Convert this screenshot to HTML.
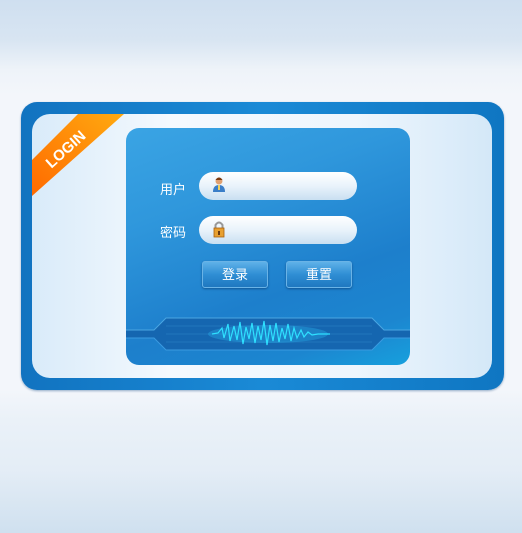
<!DOCTYPE html>
<html><head><meta charset="utf-8"><style>
*{margin:0;padding:0}
body{width:522px;height:533px;overflow:hidden;position:relative;font-family:"Liberation Sans","Noto Sans CJK SC",sans-serif;
background:linear-gradient(#cfdff0 0px,#d8e5f2 40px,#eef3f9 70px,#f3f6fb 95px,#f3f6fb 390px,#eaf1f8 420px,#e4edf6 470px,#cfe0ef 533px);}
.frame{position:absolute;left:21px;top:102px;width:483px;height:288px;border-radius:16px;
background:linear-gradient(90deg,#1173c0,#1a8ad6 50%,#0f76c2);box-shadow:0 1px 2px rgba(0,60,120,.4)}
.inner{position:absolute;left:32px;top:114px;width:460px;height:264px;border-radius:18px;overflow:hidden;
background:linear-gradient(90deg,#d9ebf9,#f4f9fe 30%,#eef6fd 70%,#d4e8f8)}
.panel{position:absolute;left:126px;top:128px;width:284px;height:237px;border-radius:13px;overflow:hidden;
background:linear-gradient(160deg,#3aa4e4 0%,#2f97dc 30%,#1d7fcc 65%,#1c86d0 85%,#17a0dd 100%)}
.lbl{position:absolute;color:#fff;font-size:13px}
.inp{position:absolute;left:199px;width:158px;height:28px;border-radius:14px;
background:linear-gradient(#ffffff,#e9f3fb 50%,#c9dff1)}
.btn{position:absolute;top:261px;width:64px;height:25px;border:1px solid #6ab3e6;border-radius:3px;
background:linear-gradient(#5fb1e8,#2f8ed4 50%,#1f78c0);color:#fff;font-size:13px;text-align:center;line-height:25px;box-shadow:0 1px 2px rgba(0,40,90,.5)}
</style></head><body>
<div class="frame"></div>
<div class="inner"></div>
<svg style="position:absolute;left:0;top:0" width="522" height="533">
<defs><linearGradient id="rb" x1="0" y1="1" x2="1" y2="0"><stop offset="0" stop-color="#ff6a00"/><stop offset="1" stop-color="#ffaa10"/></linearGradient></defs>
<polygon points="78,114 124,114 32,196 32,160" fill="url(#rb)"/>
<text x="0" y="0" transform="translate(69,153) rotate(-42)" fill="#fff" font-family="Liberation Sans" font-weight="bold" font-size="15" text-anchor="middle">LOGIN</text>
</svg>
<div class="panel">
<svg style="position:absolute;left:0;top:186px" width="284" height="40">
<path d="M0,16 H28 L40,4 H246 L258,16 H284 V24 H258 L246,36 H40 L28,24 H0Z" fill="#1566b0"/>
<path d="M0,16 H28 L40,4 H246 L258,16 H284" fill="none" stroke="#4aa6e2" stroke-width="1"/>
<path d="M0,24 H28 L40,36 H246 L258,24 H284" fill="none" stroke="#3a9ae0" stroke-width="1"/>
<g stroke="#2f84c8" stroke-width="0.6">
<path d="M40,12H246M40,20H246M40,28H246"/>
</g>
<ellipse cx="142" cy="20" rx="60" ry="9" fill="#2ab6f0" opacity=".35"/>
<path d="M86,20 L92,19 96,14 98,24 102,10 104,27 108,12 111,26 114,8 117,30 120,13 123,25 126,9 129,29 132,12 135,26 138,7 141,31 144,11 147,27 150,9 153,28 156,14 159,25 162,10 165,27 168,14 171,24 175,16 178,23 182,18 186,21 192,20 204,20" fill="none" stroke="#2ee0ff" stroke-width="1.2"/>
</svg>
</div>
<div class="lbl" style="left:160px;top:179px">用户</div>
<div class="lbl" style="left:160px;top:222px">密码</div>
<div class="inp" style="top:172px"></div>
<div class="inp" style="top:216px"></div>
<svg style="position:absolute;left:211px;top:176px" width="16" height="18">
<circle cx="8" cy="5" r="3.5" fill="#e0a070"/><path d="M4.5,4 Q8,-1 11.5,4 Z" fill="#7a3a10"/>
<path d="M2,16 Q2,9 8,9 Q14,9 14,16Z" fill="#3a7ec8"/><rect x="7" y="9" width="2" height="5" fill="#f0d060"/>
</svg>
<svg style="position:absolute;left:211px;top:219px" width="16" height="20">
<path d="M4.5,9 V6 Q8,1 11.5,6 V9" fill="none" stroke="#999" stroke-width="2"/>
<rect x="3" y="9" width="10" height="9" fill="#e8a030" stroke="#a86010" stroke-width=".8"/>
<rect x="7" y="12" width="2" height="4" fill="#6a3a10"/>
</svg>
<div class="btn" style="left:202px">登录</div>
<div class="btn" style="left:286px">重置</div>
</body></html>
